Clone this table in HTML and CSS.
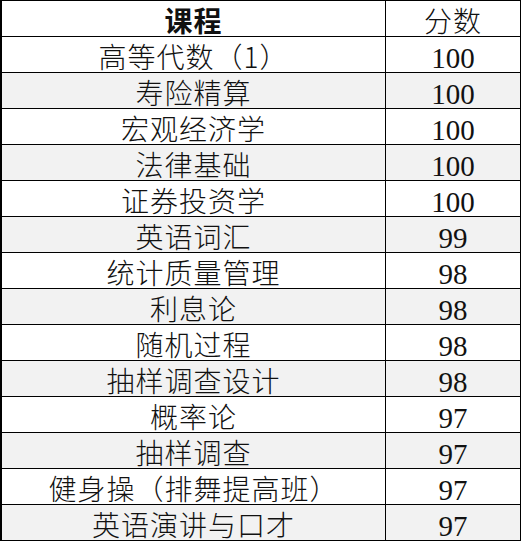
FILE: index.html
```html
<!DOCTYPE html>
<html lang="zh-CN">
<head>
<meta charset="utf-8">
<title>课程成绩</title>
<link rel="stylesheet" href="styles.css">
</head>
<body>
<table class="scores">
  <thead>
    <tr><th class="course head-bold">课程</th><th class="score head-song">分数</th></tr>
  </thead>
  <tbody>
    <tr><td class="course">高等代数（1）</td><td class="score">100</td></tr>
    <tr class="alt"><td class="course">寿险精算</td><td class="score">100</td></tr>
    <tr><td class="course">宏观经济学</td><td class="score">100</td></tr>
    <tr class="alt"><td class="course">法律基础</td><td class="score">100</td></tr>
    <tr><td class="course">证券投资学</td><td class="score">100</td></tr>
    <tr class="alt"><td class="course">英语词汇</td><td class="score">99</td></tr>
    <tr><td class="course">统计质量管理</td><td class="score">98</td></tr>
    <tr class="alt"><td class="course">利息论</td><td class="score">98</td></tr>
    <tr><td class="course">随机过程</td><td class="score">98</td></tr>
    <tr class="alt"><td class="course">抽样调查设计</td><td class="score">98</td></tr>
    <tr><td class="course">概率论</td><td class="score">97</td></tr>
    <tr class="alt"><td class="course">抽样调查</td><td class="score">97</td></tr>
    <tr><td class="course">健身操（排舞提高班）</td><td class="score">97</td></tr>
    <tr class="alt"><td class="course">英语演讲与口才</td><td class="score">97</td></tr>
  </tbody>
</table>
</body>
</html>
```

FILE: styles.css
```css
html, body {
  margin: 0;
  padding: 0;
  background: #ffffff;
}

.scores {
  border-collapse: separate;
  border-spacing: 0;
  border-top: 1px solid #000;
  border-left: 2px solid #000;
  table-layout: fixed;
  width: 521px;
  color: #111;
}

.scores th,
.scores td {
  height: 36px;
  padding: 0;
  border-right: 1px solid #000;
  border-bottom: 1px solid #000;
  text-align: center;
  white-space: nowrap;
  box-sizing: border-box;
  vertical-align: top;
}

.scores th.course,
.scores td.course {
  width: 384px;
  padding-top: 4px;
  font-family: "Noto Sans CJK SC", sans-serif;
  font-weight: 300;
  font-size: 28px;
  letter-spacing: 1px;
  line-height: 31px;
}

.scores td.score,
.scores th.score {
  padding-top: 7px;
  font-family: "Liberation Serif", "Times New Roman", serif;
  font-size: 29px;
  line-height: 28px;
  font-weight: 400;
}

.scores th.head-bold {
  font-family: "Noto Sans CJK SC", sans-serif;
  font-weight: 700;
}

.scores th.head-song {
  padding-top: 4px;
  font-family: "Noto Sans CJK SC", sans-serif;
  font-weight: 300;
  font-size: 28px;
  letter-spacing: 1px;
  line-height: 31px;
}

.scores tr.alt td {
  background: #f2f2f2;
}
```
